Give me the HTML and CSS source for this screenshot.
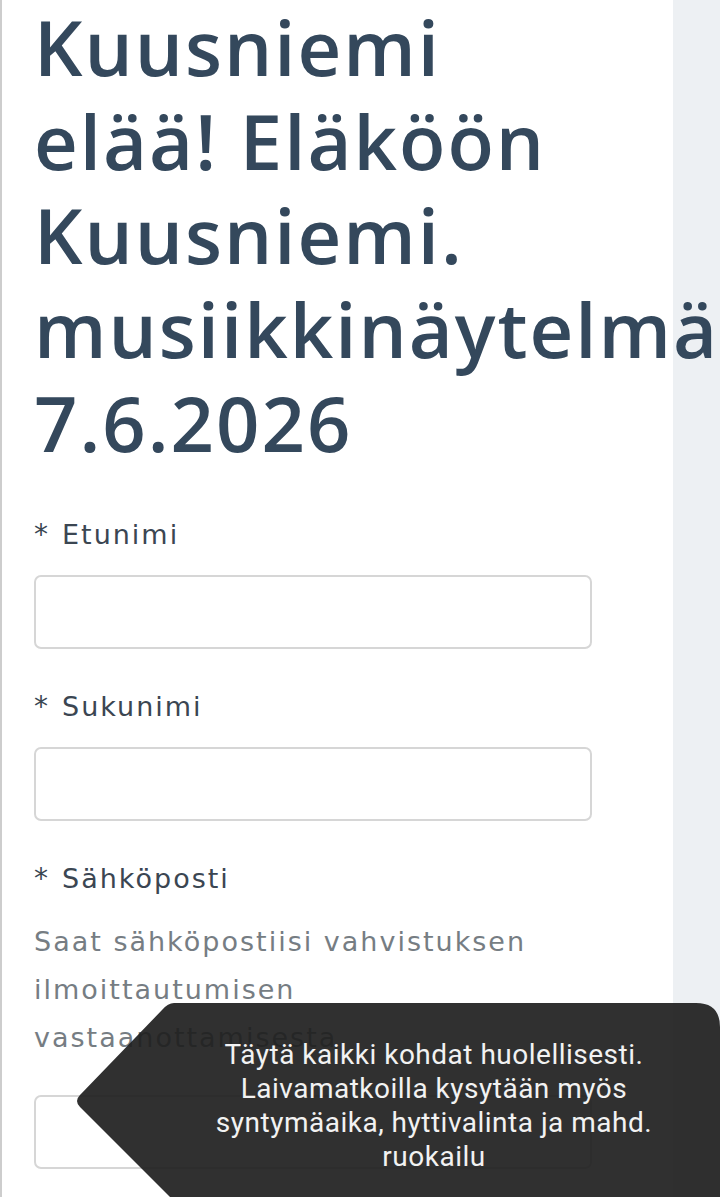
FILE: index.html
```html
<!DOCTYPE html>
<html lang="fi">
<head>
<meta charset="utf-8">
<title>Kuusniemi elää! Eläköön Kuusniemi.</title>
<link rel="stylesheet" href="styles.css">
</head>
<body>
<div class="page">
  <main class="panel">
    <h1 class="title">Kuusniemi elää! Eläköön Kuusniemi. musiikkinäytelmä 7.6.2026</h1>
    <form class="form">
      <div class="field">
        <label class="label"><span class="req">*</span>Etunimi</label>
        <div class="input"></div>
      </div>
      <div class="field">
        <label class="label"><span class="req">*</span>Sukunimi</label>
        <div class="input"></div>
      </div>
      <div class="field">
        <label class="label"><span class="req">*</span>Sähköposti</label>
        <p class="help">Saat sähköpostiisi vahvistuksen<br>ilmoittautumisen<br>vastaanottamisesta</p>
        <div class="input input-last"></div>
      </div>
    </form>
  </main>
  <aside class="side"></aside>
</div>
<div class="toast">
  <svg class="toast-shape" width="646" height="200" viewBox="0 0 646 200" aria-hidden="true">
    <path d="M100 0 H622 Q646 0 646 24 V200 H102 L6 104 Q0 98 6 92 L88 7 Q94 0 100 0 Z" fill="rgba(30,30,30,0.92)"/>
  </svg>
  <p class="toast-text">Täytä kaikki kohdat huolellisesti.<br>Laivamatkoilla kysytään myös<br>syntymäaika, hyttivalinta ja mahd.<br>ruokailu</p>
</div>
</body>
</html>
```
FILE: styles.css
```css
html, body {
  margin: 0;
  padding: 0;
}
body {
  background: #edf0f3;
  width: 720px;
  height: 1197px;
  overflow: hidden;
  position: relative;
}
.page {
  display: flex;
  height: 1197px;
}
.panel {
  width: 673px;
  flex: none;
  box-sizing: border-box;
  background: #ffffff;
  border-left: 2px solid #cdcdcd;
  padding: 0 0 0 32px;
  position: relative;
  z-index: 1;
}
.side {
  flex: 1;
  background: #edf0f3;
}
.title {
  margin: 0;
  padding-top: 0;
  font-family: "Open Sans", "Noto Sans", sans-serif;
  font-weight: 600;
  font-size: 76px;
  line-height: 94px;
  letter-spacing: 2px;
  color: #34485c;
  width: 560px;
  white-space: normal;
}
.form {
  margin-top: 45px;
  width: 558px;
}
.field {
  display: flex;
  flex-direction: column;
  margin-bottom: 38px;
}
.label {
  font-family: "DejaVu Sans", "Open Sans", sans-serif;
  font-size: 27px;
  line-height: 40px;
  letter-spacing: 2px;
  color: #3b4652;
  display: flex;
  gap: 12px;
  margin-bottom: 20px;
}
.req {
  font-size: 28px;
}
.input {
  height: 74px;
  box-sizing: border-box;
  border: 2px solid #d6d6d6;
  border-radius: 7px;
  background: #fff;
}
.help {
  margin: -1px 0 33px 0;
  font-family: "DejaVu Sans", "Open Sans", sans-serif;
  font-size: 27px;
  line-height: 48px;
  letter-spacing: 2px;
  color: #767d83;
}
.toast {
  position: absolute;
  left: 74px;
  top: 1003px;
  width: 646px;
  height: 200px;
  z-index: 5;
}
.toast-shape {
  position: absolute;
  left: 0;
  top: 0;
  display: block;
}
.toast-text {
  position: relative;
  margin: 0;
  padding: 35px 0 0 90px;
  width: 540px;
  text-align: center;
  font-family: Roboto, "Noto Sans", sans-serif;
  font-size: 28px;
  line-height: 34px;
  letter-spacing: 0.5px;
  color: #f2f2f2;
}
```
